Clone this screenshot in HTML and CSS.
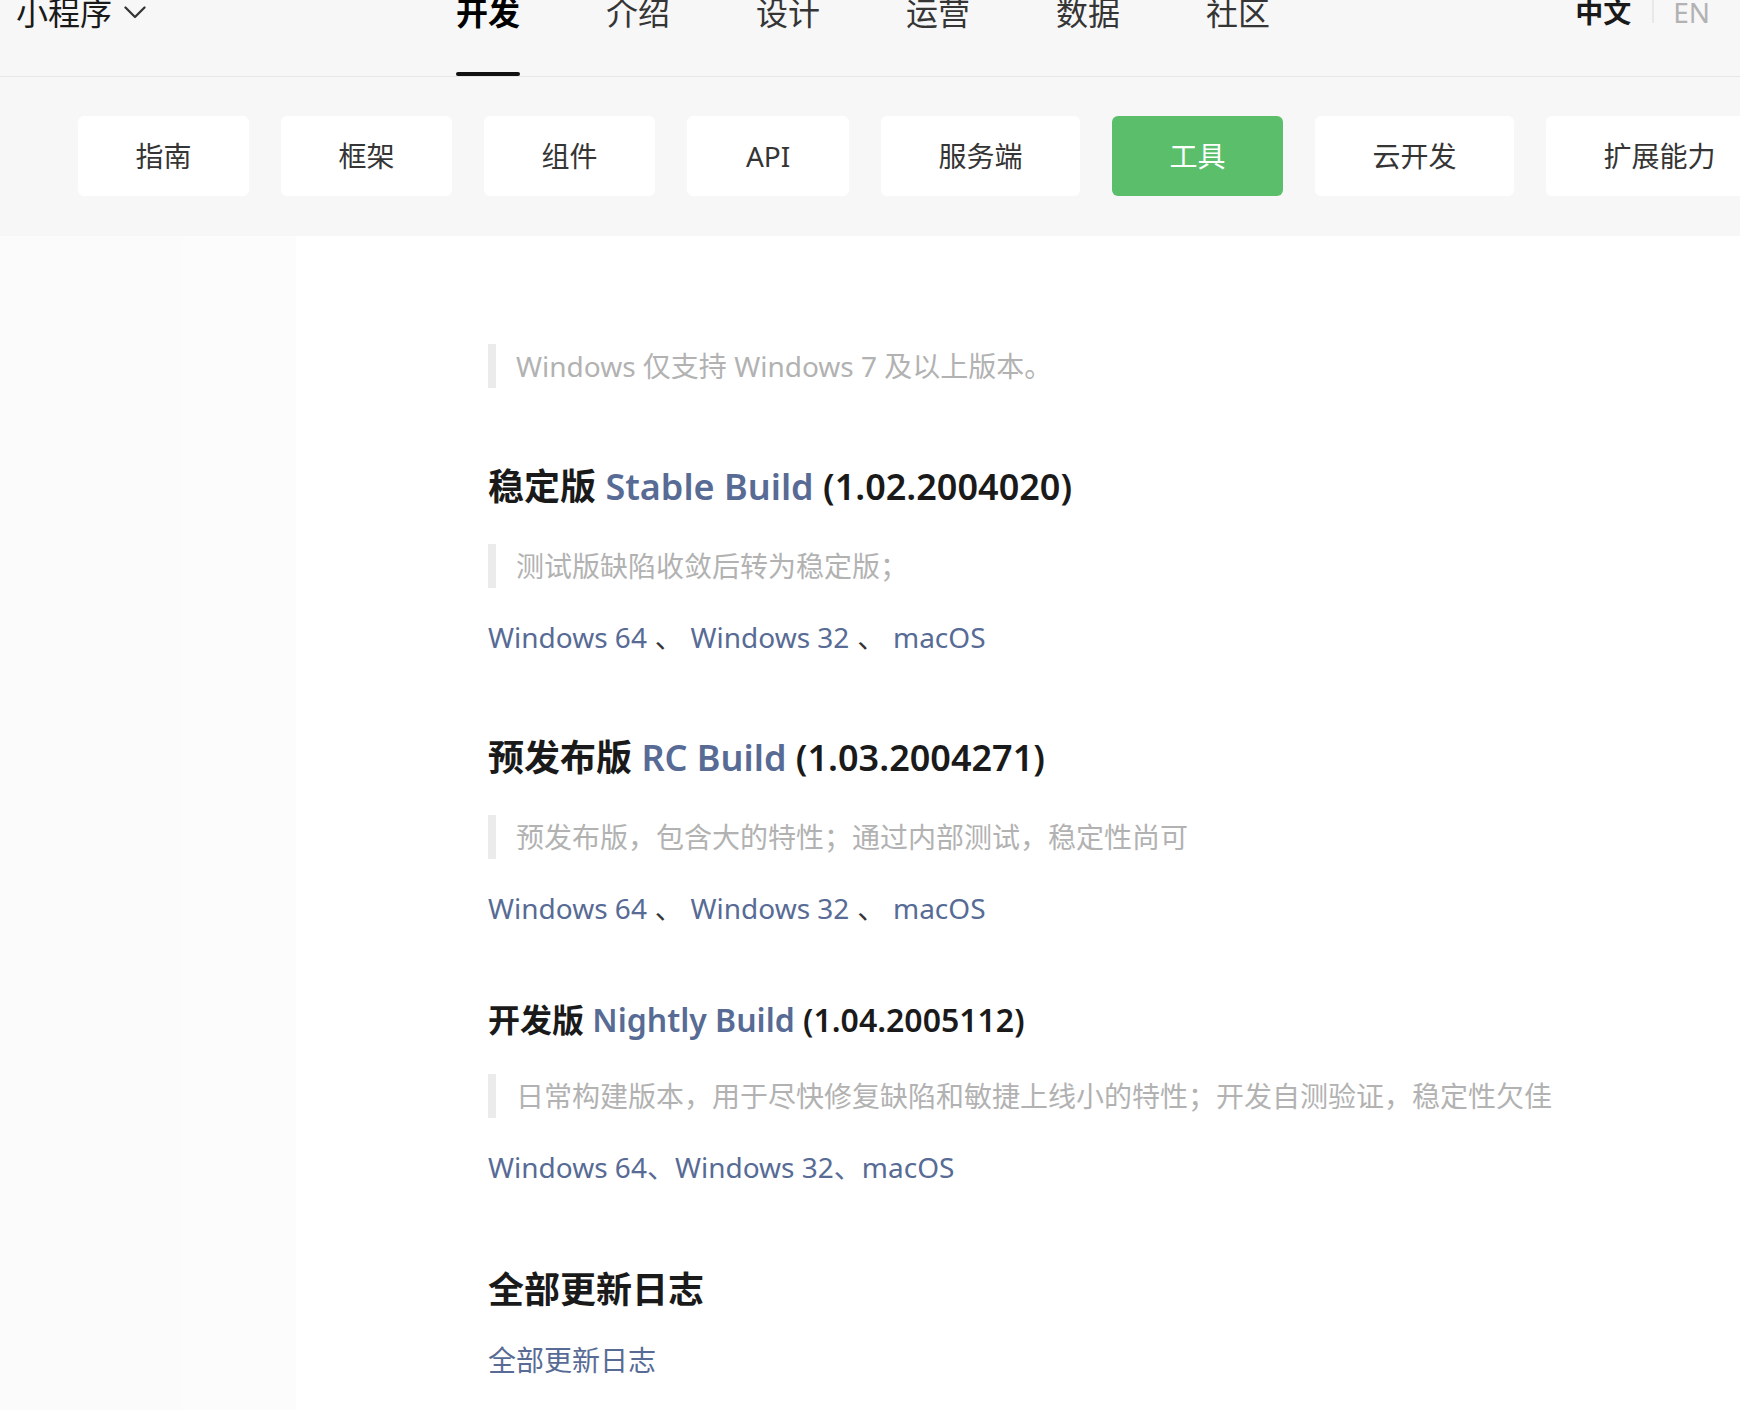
FILE: index.html
```html
<!DOCTYPE html>
<html lang="zh-CN">
<head>
<meta charset="utf-8">
<title>开发者工具</title>
<link rel="stylesheet" href="styles.css">
</head>
<body>
<header class="topbar">
  <div class="brand">
    <span class="brand-name">小程序</span>
    <svg class="brand-chev" width="22" height="13" viewBox="0 0 22 13"><polyline points="1.5,1.5 11,11 20.5,1.5" fill="none" stroke="#353535" stroke-width="2.3" stroke-linecap="round" stroke-linejoin="round"/></svg>
  </div>
  <nav class="mainnav">
    <a class="mainnav-item is-active">开发</a>
    <a class="mainnav-item">介绍</a>
    <a class="mainnav-item">设计</a>
    <a class="mainnav-item">运营</a>
    <a class="mainnav-item">数据</a>
    <a class="mainnav-item">社区</a>
  </nav>
  <div class="lang">
    <span class="lang-cur">中文</span>
    <span class="lang-sep"></span>
    <span class="lang-en">EN</span>
  </div>
</header>

<nav class="subnav">
  <a class="subnav-item">指南</a>
  <a class="subnav-item">框架</a>
  <a class="subnav-item">组件</a>
  <a class="subnav-item">API</a>
  <a class="subnav-item">服务端</a>
  <a class="subnav-item is-active">工具</a>
  <a class="subnav-item">云开发</a>
  <a class="subnav-item">扩展能力</a>
</nav>

<main class="page">
  <aside class="sidebar"><div class="sidebar-inner"></div></aside>
  <article class="doc">
    <blockquote class="note">Windows 仅支持 Windows 7 及以上版本。</blockquote>

    <h2 class="doc-h2">稳定版 <a class="link">Stable Build</a> (1.02.2004020)</h2>
    <blockquote class="note">测试版缺陷收敛后转为稳定版；</blockquote>
    <p class="downloads"><a class="link">Windows 64</a> <span class="sep">、</span> <a class="link">Windows 32</a> <span class="sep">、</span> <a class="link">macOS</a></p>

    <h2 class="doc-h2">预发布版 <a class="link">RC Build</a> (1.03.2004271)</h2>
    <blockquote class="note">预发布版，包含大的特性；通过内部测试，稳定性尚可</blockquote>
    <p class="downloads"><a class="link">Windows 64</a> <span class="sep">、</span> <a class="link">Windows 32</a> <span class="sep">、</span> <a class="link">macOS</a></p>

    <h3 class="doc-h3">开发版 <a class="link">Nightly Build</a> (1.04.2005112)</h3>
    <blockquote class="note">日常构建版本，用于尽快修复缺陷和敏捷上线小的特性；开发自测验证，稳定性欠佳</blockquote>
    <p class="downloads downloads-tight"><a class="link">Windows 64</a>、<a class="link">Windows 32</a>、<a class="link">macOS</a></p>

    <h2 class="doc-h2 doc-h2-last">全部更新日志</h2>
    <p class="downloads"><a class="link">全部更新日志</a></p>
  </article>
</main>
</body>
</html>
```

FILE: styles.css
```css
* { box-sizing: border-box; }

html, body {
  margin: 0;
  padding: 0;
  background: #fff;
  font-family: "Noto Sans", "Noto Sans CJK SC", sans-serif;
  color: #353535;
  overflow: hidden;
}

a { text-decoration: none; color: inherit; cursor: pointer; }

/* ---------- top bar ---------- */
.topbar {
  display: flex;
  height: 77px;
  background: #f7f7f7;
  border-bottom: 1px solid #e6e6e6;
  padding: 0 30px 0 16px;
}

.brand {
  display: flex;
  align-items: flex-start;
  margin-top: -9px;
  height: 44px;
}
.brand-name {
  font-size: 32px;
  line-height: 44px;
  color: #1a1a1a;
}
.brand-chev {
  margin-left: 12px;
  margin-top: 15px;
}

.mainnav {
  display: flex;
  gap: 86px;
  margin-left: 310px;
}
.mainnav-item {
  display: flex;
  flex-direction: column;
  justify-content: space-between;
  margin-top: -9px;
  font-size: 32px;
  line-height: 44px;
  color: #353535;
}
.mainnav-item::after {
  content: "";
  display: block;
  height: 4px;
  border-radius: 2px;
  background: transparent;
}
.mainnav-item.is-active {
  color: #000;
  font-weight: 700;
}
.mainnav-item.is-active::after { background: #111; }

.lang {
  margin-left: auto;
  margin-top: -10px;
  display: flex;
  align-items: flex-start;
  height: 44px;
  font-size: 28px;
  line-height: 44px;
}
.lang-cur { color: #1a1a1a; font-weight: 700; }
.lang-sep {
  width: 2px;
  height: 28px;
  margin: 5px 19px 0 21px;
  background: #e8e8e8;
}
.lang-en { color: #b2b2b2; }

/* ---------- sub nav ---------- */
.subnav {
  display: flex;
  gap: 32px;
  background: #f7f7f7;
  padding: 39px 0 40px 78px;
  overflow: hidden;
}
.subnav-item {
  flex-shrink: 0;
  min-width: 162px;
  height: 80px;
  padding: 0 57.5px;
  background: #fff;
  border-radius: 6px;
  font-size: 28px;
  line-height: 80px;
  text-align: center;
  color: #353535;
  white-space: nowrap;
}
.subnav-item.is-active {
  background: #5abe6b;
  color: #fff;
}

/* ---------- page ---------- */
.page {
  display: flex;
  min-height: calc(100vh - 236px);
}
.sidebar {
  width: 296px;
  flex-shrink: 0;
  background: #fcfcfc;
}
.sidebar-inner {
  width: 182px;
  height: 100%;
  background: #fbfbfb;
}

.doc {
  padding: 108px 0 40px 192px;
  flex: 1;
}

.note {
  margin: 0 0 27px;
  padding-left: 20px;
  border-left: 8px solid #ebebeb;
  font-size: 28px;
  line-height: 44px;
  color: #b2b2b2;
  white-space: nowrap;
}

.doc-h2 {
  margin: 74px 0 32px;
  font-size: 36px;
  line-height: 50px;
  font-weight: 600;
  color: #1a1a1a;
  white-space: nowrap;
}
.doc-h2-last { margin-bottom: 23px; margin-top: 76px; }

.doc-h3 {
  margin: 67px 0 31px;
  font-size: 32px;
  line-height: 46px;
  font-weight: 600;
  color: #1a1a1a;
  white-space: nowrap;
}

.link { color: #576b95; }

.downloads {
  margin: 0;
  font-size: 28px;
  line-height: 44px;
  white-space: nowrap;
}
.downloads .sep { color: #353535; margin: 0 0.5px; }
.downloads-tight { color: #576b95; }
```
